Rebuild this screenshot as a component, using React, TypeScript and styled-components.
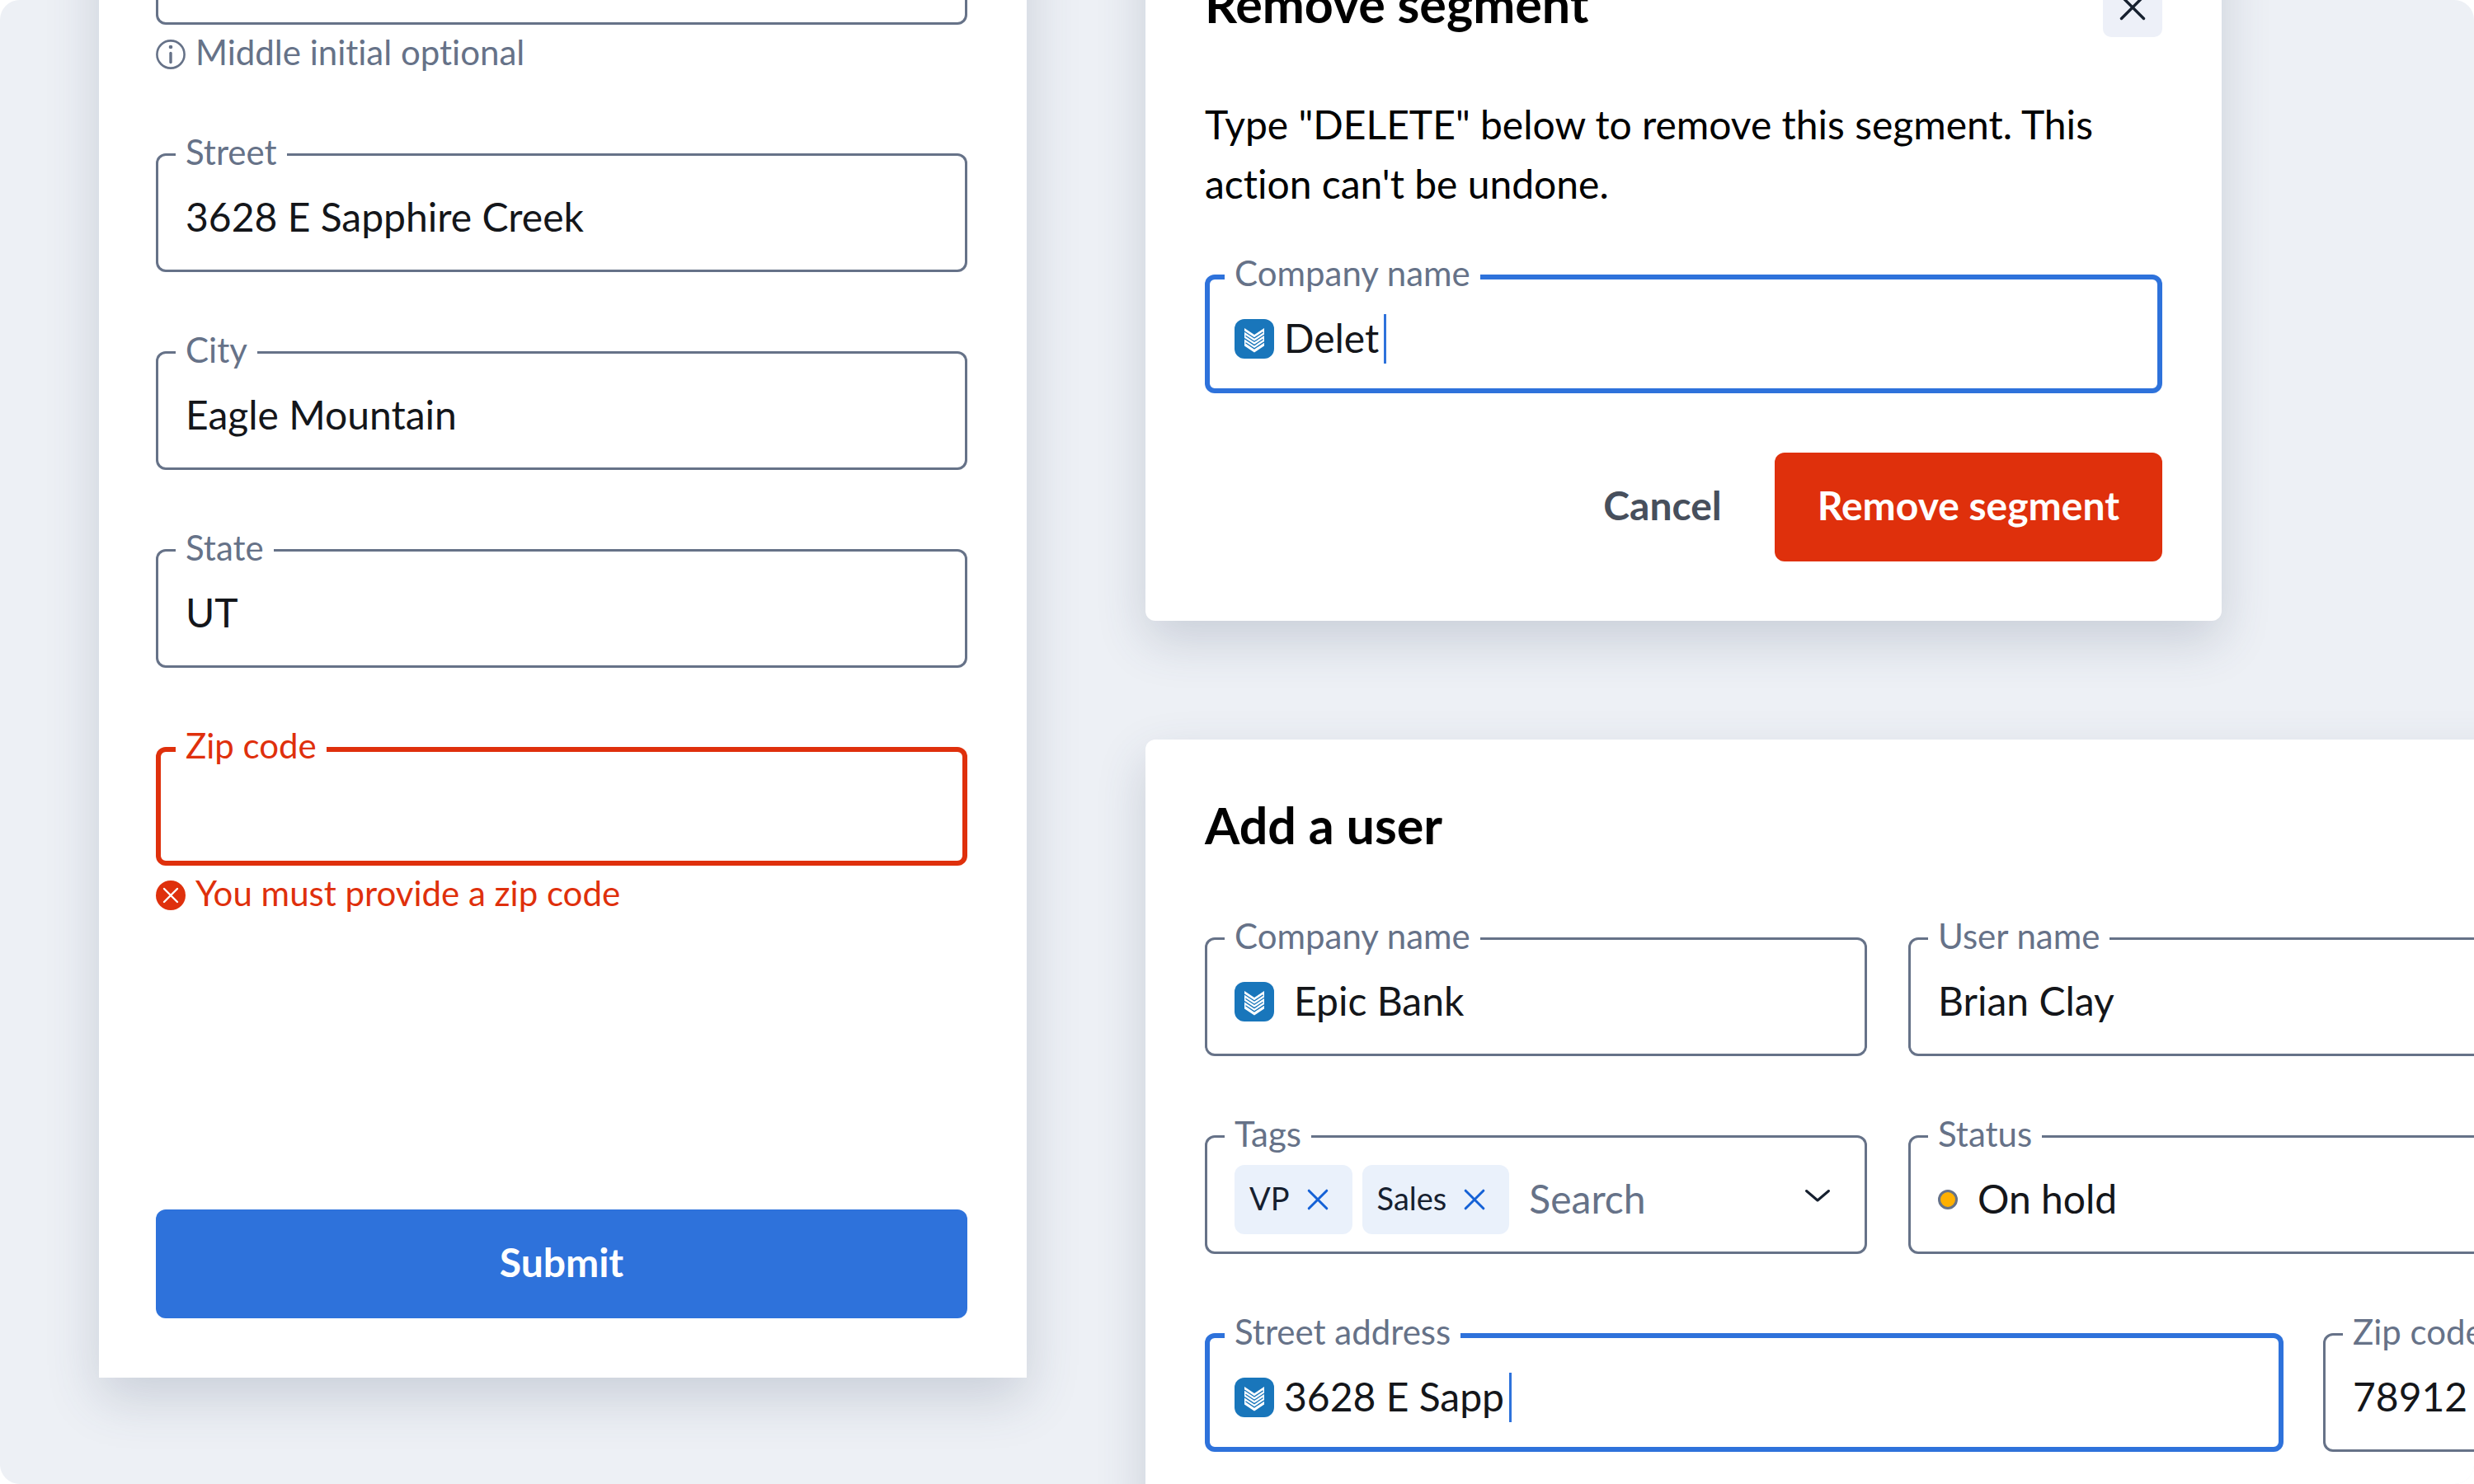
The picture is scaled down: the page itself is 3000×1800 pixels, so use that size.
import React, { useId } from "react";
import styled, { createGlobalStyle, css } from "styled-components";

const color = {
  canvas: "#edf0f5",
  surface: "#ffffff",
  heading: "#000000",
  text: "#14161a",
  muted: "#667288",
  quiet: "#474f5c",
  icon: "#16202f",
  primary: "#2e72db",
  link: "#1461d6",
  danger: "#df300c",
  chip: "#eaf1fb",
  soft: "#edf0f8",
  hold: "#ffb000",
  brand: "#1976bb",
};

type Tone = "default" | "focus" | "error";

const GlobalStyle = createGlobalStyle`
  *, *::before, *::after { box-sizing: border-box; }
  body {
    margin: 0;
    background: #ffffff;
    font-family: Lato, "Open Sans", sans-serif;
    font-variant-ligatures: none;
  }
  button, input, select { font: inherit; font-variant-ligatures: none; color: inherit; }
  h2, p { margin: 0; }
`;

/* ---------- layout ---------- */

const Canvas = styled.main`
  height: 100vh;
  overflow: hidden;
  border-radius: 24px;
  background: ${color.canvas};
  color: ${color.text};
  font-size: 48px;
`;

const Board = styled.div`
  display: grid;
  grid-template-columns: 37.5vw 60vw;
  column-gap: 144px;
  align-items: start;
  margin-top: -186px;
  padding-left: 4vw;
`;

const Column = styled.div`
  display: flex;
  flex-direction: column;
  align-items: flex-start;
  gap: 144px;
  padding-top: 87px;
`;

const surface = css`
  background: ${color.surface};
  box-shadow: 0 24px 60px rgba(60, 75, 105, 0.2);
`;

const AddressCard = styled.form`
  ${surface}
  display: flex;
  flex-direction: column;
  gap: 96px;
  padding: 72px 72px 72px 69px;
`;

const Dialog = styled.form`
  ${surface}
  width: 43.5vw;
  padding: 72px;
  border-radius: 12px;
`;

const UserCard = styled.form`
  ${surface}
  width: 100%;
  display: flex;
  flex-direction: column;
  gap: 96px;
  padding: 72px;
  border-radius: 12px;
`;

const CardHeader = styled.header`
  display: flex;
  justify-content: space-between;
  align-items: flex-start;
  height: 72px;
`;

const Title = styled.h2`
  color: ${color.heading};
  font-size: 61px;
  font-weight: 700;
  line-height: 64px;
`;

const Message = styled.p`
  margin: 70px 0 74px;
  color: ${color.heading};
  line-height: 72px;
`;

const HalfRow = styled.div`
  display: grid;
  grid-template-columns: repeat(2, minmax(0, 1fr));
  gap: 50px;
`;

const AddressRow = styled.div`
  display: grid;
  grid-template-columns: minmax(0, 1fr) 300px;
  gap: 48px;
`;

const Actions = styled.footer`
  display: flex;
  justify-content: flex-end;
  gap: 12px;
  margin-top: 72px;
`;

const FormEnd = styled.footer`
  display: flex;
  margin-top: 261px;
`;

/* ---------- buttons ---------- */

const Button = styled.button<{ $kind: "primary" | "danger" | "plain"; $wide?: boolean }>`
  flex: ${(p) => (p.$wide ? "1" : "none")};
  height: 132px;
  padding: 0 52px 5px;
  border: 0;
  border-radius: 12px;
  background: ${(p) => (p.$kind === "plain" ? "transparent" : color[p.$kind])};
  color: ${(p) => (p.$kind === "plain" ? color.quiet : "#ffffff")};
  font-weight: 700;
  cursor: pointer;
`;

const CloseButton = styled.button`
  display: grid;
  place-items: center;
  width: 72px;
  height: 72px;
  padding: 0;
  border: 0;
  border-radius: 10px;
  background: ${color.soft};
  color: ${color.icon};
  cursor: pointer;
`;

const ClearButton = styled.button`
  display: grid;
  place-items: center;
  width: 48px;
  height: 48px;
  padding: 0;
  border: 0;
  background: none;
  color: ${color.link};
  cursor: pointer;
`;

/* ---------- field ---------- */

const toneColor = (tone: Tone) =>
  tone === "focus" ? color.primary : tone === "error" ? color.danger : color.muted;

const FieldBox = styled.div<{ $tone: Tone }>`
  position: relative;
  display: flex;
  align-items: center;
  height: 144px;
  padding: 12px 36px 0;
  border-radius: 12px;
  box-shadow: inset 0 0 0 ${(p) => (p.$tone === "default" ? "3px" : "6px")} ${(p) => toneColor(p.$tone)};
`;

const FieldLabel = styled.label<{ $error: boolean }>`
  position: absolute;
  top: -26px;
  left: 24px;
  padding: 0 12px;
  background: ${color.surface};
  color: ${(p) => (p.$error ? color.danger : color.muted)};
  font-size: 42px;
  line-height: 48px;
`;

const control = css`
  height: 72px;
  padding: 0 0 4px;
  border: 0;
  outline: 0;
  background: transparent;
`;

const TextInput = styled.input<{ $hug?: boolean }>`
  ${control}
  ${(p) =>
    p.$hug
      ? css`
          flex: none;
          field-sizing: content;
        `
      : css`
          flex: 1;
          min-width: 0;
        `}
  &::placeholder {
    color: ${color.muted};
    opacity: 1;
  }
`;

const StatusSelect = styled.select`
  ${control}
  flex: 1;
  margin-left: 24px;
  appearance: none;
`;

const Caret = styled.span`
  width: 3px;
  height: 60px;
  margin-left: 6px;
  background: ${color.primary};
`;

const Hint = styled.p<{ $error?: boolean }>`
  display: flex;
  align-items: flex-start;
  gap: 12px;
  padding: 18px 0 6px;
  color: ${(p) => (p.$error ? color.danger : color.muted)};
  font-size: 42px;
  line-height: 30px;
`;

const Chips = styled.ul`
  display: flex;
  gap: 12px;
  margin: 0 24px 0 0;
  padding: 0;
  list-style: none;
`;

const Chip = styled.li`
  display: flex;
  align-items: center;
  gap: 10px;
  height: 84px;
  padding: 0 18px;
  border-radius: 12px;
  background: ${color.chip};
  color: ${color.icon};
  font-size: 38px;
`;

const ChipText = styled.span`
  padding-bottom: 4px;
`;

const StatusDot = styled.span`
  flex: none;
  width: 24px;
  height: 24px;
  border: 3px solid ${color.muted};
  border-radius: 50%;
  background: ${color.hold};
`;

const Icon = styled.svg<{ $gap?: number }>`
  flex: none;
  display: block;
  margin-right: ${(p) => p.$gap ?? 0}px;
`;

/* ---------- icons ---------- */

const InfoIcon = () => (
  <Icon width="36" height="36" viewBox="0 0 36 36" fill="none" aria-hidden="true">
    <circle cx="18" cy="18" r="16.6" stroke="currentColor" strokeWidth="2.6" />
    <circle cx="18" cy="9" r="2.3" fill="currentColor" />
    <path d="M18 16.5V27.5" stroke="currentColor" strokeWidth="3.4" strokeLinecap="round" />
  </Icon>
);

const ErrorIcon = () => (
  <Icon width="36" height="36" viewBox="0 0 36 36" fill="none" aria-hidden="true">
    <circle cx="18" cy="18" r="18" fill="currentColor" />
    <path d="M10 10L26 26M26 10L10 26" stroke="#ffffff" strokeWidth="2.4" strokeLinecap="round" />
  </Icon>
);

const CloseIcon = () => (
  <Icon width="48" height="48" viewBox="0 0 48 48" fill="none" aria-hidden="true">
    <path d="M10.5 10.5L37.5 37.5M37.5 10.5L10.5 37.5" stroke="currentColor" strokeWidth="3.4" strokeLinecap="round" />
  </Icon>
);

const ClearIcon = () => (
  <Icon width="48" height="48" viewBox="0 0 48 48" fill="none" aria-hidden="true">
    <path d="M13.2 13.2L34.8 34.8M34.8 13.2L13.2 34.8" stroke="currentColor" strokeWidth="3" strokeLinecap="round" />
  </Icon>
);

const ChevronIcon = () => (
  <Icon width="48" height="48" viewBox="0 0 48 48" fill="none" aria-hidden="true">
    <path d="M10.5 13.5L24 25L37.5 13.5" stroke={color.icon} strokeWidth="3" strokeLinecap="round" strokeLinejoin="round" />
  </Icon>
);

const BankLogo = ({ gap }: { gap: number }) => (
  <Icon $gap={gap} width="48" height="48" viewBox="0 0 48 48" fill="none" aria-hidden="true">
    <rect width="48" height="48" rx="12" fill={color.brand} />
    <path d="M12 11L24 19L36 11V32.6L24 40.6L12 32.6Z" fill="#ffffff" />
    <g stroke={color.brand} strokeWidth="1.3">
      <path d="M12 15L24 23L34.6 15.9" />
      <path d="M13.4 20.2L24 27.3L36 19.3" />
      <path d="M12 23.6L24 31.6L34.6 24.5" />
      <path d="M13.4 28.8L24 35.9L36 27.9" />
    </g>
  </Icon>
);

/* ---------- composed parts ---------- */

type FieldProps = {
  label: string;
  value?: string;
  tone?: Tone;
  logoGap?: number;
  hint?: string;
};

function Field({ label, value = "", tone = "default", logoGap, hint }: FieldProps) {
  const id = useId();
  const focused = tone === "focus";
  const error = tone === "error";
  return (
    <div>
      <FieldBox $tone={tone}>
        <FieldLabel htmlFor={id} $error={error}>
          {label}
        </FieldLabel>
        {logoGap !== undefined && <BankLogo gap={logoGap} />}
        <TextInput
          id={id}
          type="text"
          defaultValue={value}
          $hug={focused}
          aria-invalid={error}
          aria-describedby={hint ? `${id}-hint` : undefined}
        />
        {focused && <Caret />}
      </FieldBox>
      {hint && (
        <Hint id={`${id}-hint`} $error={error}>
          {error ? <ErrorIcon /> : <InfoIcon />}
          {hint}
        </Hint>
      )}
    </div>
  );
}

function TagsField({ tags }: { tags: string[] }) {
  const id = useId();
  return (
    <FieldBox $tone="default">
      <FieldLabel htmlFor={id} $error={false}>
        Tags
      </FieldLabel>
      <Chips>
        {tags.map((tag) => (
          <Chip key={tag}>
            <ChipText>{tag}</ChipText>
            <ClearButton type="button" aria-label={`Remove ${tag}`}>
              <ClearIcon />
            </ClearButton>
          </Chip>
        ))}
      </Chips>
      <TextInput id={id} type="text" placeholder="Search" />
      <ChevronIcon />
    </FieldBox>
  );
}

function StatusField() {
  const id = useId();
  return (
    <FieldBox $tone="default">
      <FieldLabel htmlFor={id} $error={false}>
        Status
      </FieldLabel>
      <StatusDot />
      <StatusSelect id={id} defaultValue="On hold">
        <option>On hold</option>
      </StatusSelect>
    </FieldBox>
  );
}

export default function App() {
  return (
    <>
      <GlobalStyle />
      <Canvas>
        <Board>
          <AddressCard>
            <Field label="Name" hint="Middle initial optional" />
            <Field label="Street" value="3628 E Sapphire Creek" />
            <Field label="City" value="Eagle Mountain" />
            <Field label="State" value="UT" />
            <Field label="Zip code" tone="error" hint="You must provide a zip code" />
            <FormEnd>
              <Button type="button" $kind="primary" $wide>
                Submit
              </Button>
            </FormEnd>
          </AddressCard>

          <Column>
            <Dialog>
              <CardHeader>
                <Title>Remove segment</Title>
                <CloseButton type="button" aria-label="Close">
                  <CloseIcon />
                </CloseButton>
              </CardHeader>
              <Message>Type "DELETE" below to remove this segment. This action can't be undone.</Message>
              <Field label="Company name" value="Delet" tone="focus" logoGap={12} />
              <Actions>
                <Button type="button" $kind="plain">
                  Cancel
                </Button>
                <Button type="button" $kind="danger">
                  Remove segment
                </Button>
              </Actions>
            </Dialog>

            <UserCard>
              <CardHeader>
                <Title>Add a user</Title>
              </CardHeader>
              <HalfRow>
                <Field label="Company name" value="Epic Bank" logoGap={24} />
                <Field label="User name" value="Brian Clay" />
              </HalfRow>
              <HalfRow>
                <TagsField tags={["VP", "Sales"]} />
                <StatusField />
              </HalfRow>
              <AddressRow>
                <Field label="Street address" value="3628 E Sapp" tone="focus" logoGap={12} />
                <Field label="Zip code" value="78912" />
              </AddressRow>
            </UserCard>
          </Column>
        </Board>
      </Canvas>
    </>
  );
}
